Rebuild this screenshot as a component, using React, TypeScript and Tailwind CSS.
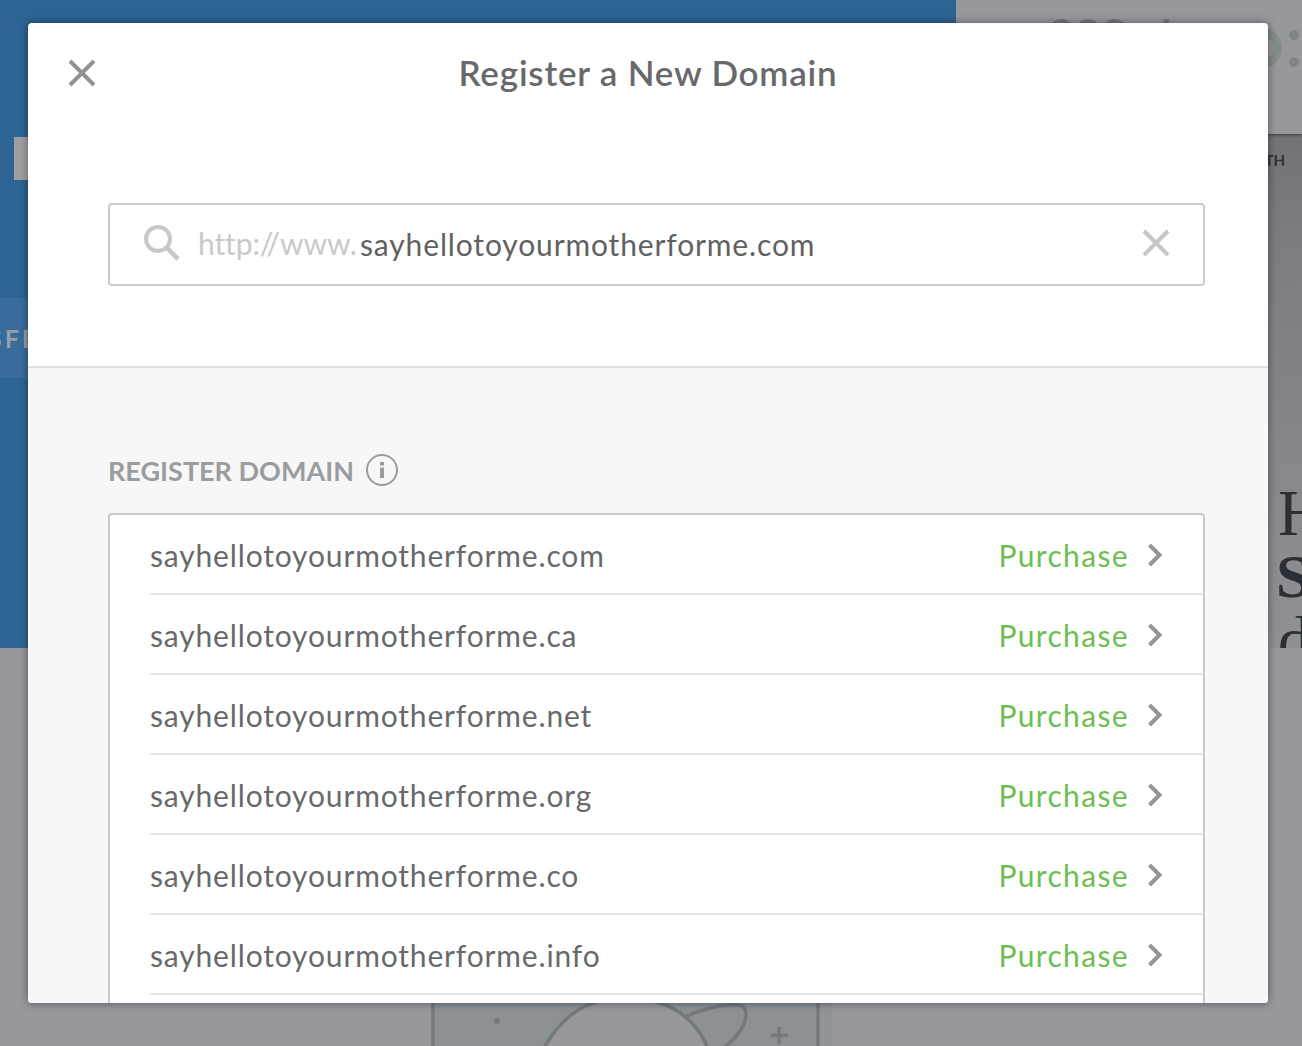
import React from 'react'

const domains = [
  'sayhellotoyourmotherforme.com',
  'sayhellotoyourmotherforme.ca',
  'sayhellotoyourmotherforme.net',
  'sayhellotoyourmotherforme.org',
  'sayhellotoyourmotherforme.co',
  'sayhellotoyourmotherforme.info',
  'sayhellotoyourmotherforme.biz',
]

function CrossIcon({ className }: { className: string }) {
  return (
    <svg className={className} viewBox="0 0 28 28" fill="none" stroke="currentColor" strokeWidth="4">
      <path d="M2 2l24 24M26 2L2 26" />
    </svg>
  )
}

function SearchIcon() {
  return (
    <svg className="h-9 w-9 shrink-0 text-[#c8c8c8]" viewBox="0 0 36 36" fill="none" stroke="currentColor">
      <circle cx="14" cy="14" r="12" strokeWidth="4" />
      <path d="M22.5 22.5L34 34" strokeWidth="4.6" />
    </svg>
  )
}

function InfoIcon() {
  return (
    <svg className="h-8 w-8 text-[#999b9c]" viewBox="0 0 32 32" fill="none">
      <circle cx="16" cy="16" r="15" stroke="currentColor" strokeWidth="2" />
      <path d="M14 8h4v3.500h-4zM14 13.500h4v10.500h-4z" fill="currentColor" />
    </svg>
  )
}

function DomainRow({ name }: { name: string }) {
  return (
    <li className="ml-10 flex h-20 items-center border-b-2 border-[#e6e6e6] pr-10">
      <span className="grow pt-0.5 text-[30px] leading-10 tracking-[0.84px] text-[#68696a]">{name}</span>
      <span className="pt-0.5 text-[30px] leading-10 tracking-[1.35px] text-[#6cbf4f]">Purchase</span>
      <svg className="mt-0.5 ml-[18px] h-6 w-4" viewBox="0 0 16 24" fill="none" stroke="#959595" strokeWidth="4">
        <path d="M2.500 2l10 10-10 10" />
      </svg>
    </li>
  )
}

// dimmed page that stays visible around the dialog
function Backdrop() {
  return (
    <div className="flex h-full flex-col bg-[#98979c]">
      <div className="flex h-[648px]">
        <div className="w-[956px] bg-[#2c6494] pt-[137px]">
          <div className="ml-3.5 h-[43px] w-10 bg-[#a0a0a2]" />
          <div className="mt-[118px] h-20 w-60 bg-[#386c9c] pt-5">
            <p className="-ml-3 text-[25px] leading-10 font-bold tracking-[3px] text-[#999fa5]">SFER</p>
          </div>
        </div>
        <div className="flex w-[346px] flex-col overflow-hidden">
          <div className="relative flex h-[134px] shrink-0 justify-between bg-[#98979c] shadow-[0_1px_3px_rgba(0,0,0,0.5)]">
            <p className="mt-2.5 ml-[92px] text-[46px] leading-[50px] font-bold text-[#77787b]">999 . ' - -</p>
            <svg className="mt-[22px] h-14 w-[58px] shrink-0" viewBox="0 0 58 56" fill="none">
              <ellipse cx="20" cy="26" rx="13.500" ry="15.500" stroke="#858a8b" strokeWidth="8.500" />
              <circle cx="50" cy="13" r="5" fill="#7f8487" />
              <circle cx="50" cy="40" r="5" fill="#7f8487" />
            </svg>
          </div>
          <div className="grow overflow-hidden bg-linear-to-b from-[#727277] via-[#7d7d82] via-25% to-[#908f94]">
            <p className="mt-4 pr-[17px] text-right text-[15px] leading-5 font-bold text-[#313238]">NORTH</p>
            <div className="mt-[311px] ml-[322px] text-[#2c2e35] [font-family:'Liberation_Serif',serif]">
              <p className="text-[65px] leading-[64px]">Hello</p>
              <p className="-ml-0.5 text-[62px] leading-[63px] font-bold">Sunny</p>
              <p className="text-[65px] leading-[64px]">days</p>
            </div>
          </div>
        </div>
      </div>
      <svg className="mt-[352px] ml-[430px] h-[46px] w-[402px]" viewBox="0 0 402 46" fill="none" stroke="#74797d" strokeWidth="3.5">
        <path d="M3 0h385v46H3z" fill="#8b9195" stroke="none" />
        <path d="M388 0h14v46h-14z" fill="#929499" stroke="none" />
        <path d="M3 0v46M388 0v46" />
        <path d="M115 46C139 1 176 0 197 0s57 6 81 46z" fill="#98979c" stroke="none" />
        <path d="M115 46C132 17 154 4 173 0M220 0c25 5 45 20 57 46" />
        <path d="M254 17C276 8 296 4 309 5c9 1 9 15 1 26-5 8-10 12-16 16" />
        <circle cx="67" cy="21" r="3" fill="#74797d" stroke="none" />
        <path d="M349 27v17M341 35.500h17" />
      </svg>
    </div>
  )
}

export default function App() {
  return (
    <div className="relative h-[1046px] w-[1302px] overflow-hidden [font-family:Lato,sans-serif]">
      <Backdrop />
      <div className="absolute inset-x-0 top-0 h-full pt-[23px]">
        <section className="ml-7 flex h-[980px] w-[1240px] flex-col overflow-hidden rounded-[4px] bg-white shadow-[0_0_8px_rgba(0,0,0,0.45)]">
          <header className="grid h-[100px] shrink-0 grid-cols-[80px_1fr_80px] items-center">
            <button type="button" aria-label="Close" className="ml-10">
              <CrossIcon className="h-7 w-7 text-[#929292]" />
            </button>
            <h1 className="pb-0.5 text-center text-[35px] leading-[38px] font-semibold tracking-[0.8px] text-[#68696b]">Register a New Domain</h1>
          </header>
          <div className="h-[245px] shrink-0 border-b-2 border-[#e2e2e2] px-20 pt-20">
            <div className="flex h-[83px] w-[1097px] items-center rounded-[4px] border-2 border-[#cbcbcb] pr-[33px] pb-[3px] pl-[34px]">
              <SearchIcon />
              <span className="ml-[18px] w-[162px] shrink-0 text-[30px] leading-10 tracking-[-0.1px] whitespace-nowrap text-[#c9c9c9] [font-variant-ligatures:none]">http://www.</span>
              <span className="grow pt-px text-[30px] leading-10 tracking-[0.86px] text-[#606162]">sayhellotoyourmotherforme.com</span>
              <CrossIcon className="h-7 w-7 text-[#c6c6c6]" />
            </div>
          </div>
          <div className="min-h-0 grow overflow-hidden bg-[#f7f7f7] px-20 pt-[82px]">
            <div className="flex h-10 items-center gap-3">
              <h2 className="w-[246px] pt-0.5 text-[27px] leading-8 font-bold whitespace-nowrap text-[#9a9d9f]">REGISTER DOMAIN</h2>
              <InfoIcon />
            </div>
            <ul className="mt-[23px] w-[1097px] rounded-[4px] border-2 border-[#c9c9c9] bg-white">
              {domains.map((name) => (
                <DomainRow key={name} name={name} />
              ))}
            </ul>
          </div>
        </section>
      </div>
    </div>
  )
}
